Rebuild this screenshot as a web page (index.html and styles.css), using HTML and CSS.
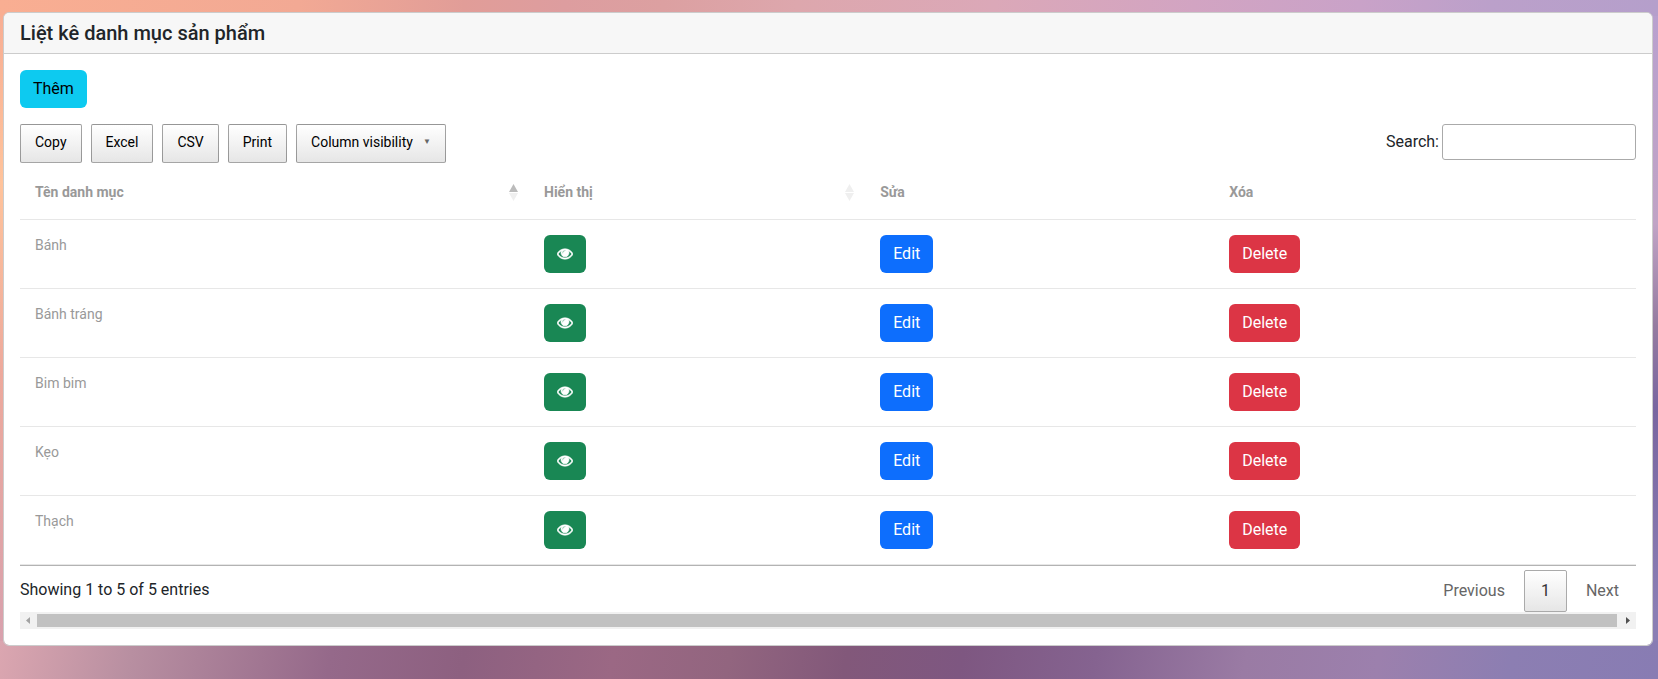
FILE: index.html
```html
<!DOCTYPE html>
<html lang="vi">
<head>
<meta charset="utf-8">
<title>Liệt kê danh mục sản phẩm</title>
<link rel="stylesheet" href="styles.css">
</head>
<body>
<svg class="defs" aria-hidden="true">
  <symbol id="eye" viewBox="0 64 1792 1792"><path d="M1664 960q-152-236-381-353 61 104 61 225 0 185-131.500 316.500t-316.500 131.500-316.500-131.500-131.500-316.500q0-121 61-225-229 117-381 353 133 205 333.500 326.500t434.500 121.500 434.500-121.500 333.500-326.500zm-720-384q0-20-14-34t-34-14q-125 0-214.500 89.500t-89.500 214.500q0 20 14 34t34 14 34-14 14-34q0-86 61-147t147-61q20 0 34-14t14-34zm848 384q0 34-20 69-140 230-376.500 368.500t-499.500 138.500-499.500-139-376.500-368q-20-35-20-69t20-69q140-229 376.500-368t499.500-139 499.500 139 376.500 368q20 35 20 69z"/></symbol>
</svg>
<main class="card">
  <header class="card-header"><h1 class="card-title">Liệt kê danh mục sản phẩm</h1></header>
  <div class="card-body">
    <a class="btn btn-info" href="#add">Thêm</a>
    <div class="toolbar">
      <div class="tools">
        <button class="tool" type="button">Copy</button>
        <button class="tool" type="button">Excel</button>
        <button class="tool" type="button">CSV</button>
        <button class="tool" type="button">Print</button>
        <button class="tool" type="button">Column visibility<span class="caret">▼</span></button>
      </div>
      <div class="search"><label for="search">Search:</label><input id="search" class="search-input" type="search"></div>
    </div>
    <table class="table">
      <colgroup><col class="col-name"><col class="col-show"><col class="col-edit"><col class="col-delete"></colgroup>
      <thead>
        <tr>
          <th scope="col" aria-sort="ascending"><div class="sortable">Tên danh mục<svg class="sort" viewBox="0 0 9 17" aria-hidden="true"><path class="on" d="M4.500 0L9 8H0z"/><path class="off" d="M0 9h9l-4.500 8z"/></svg></div></th>
          <th scope="col"><div class="sortable">Hiển thị<svg class="sort" viewBox="0 0 9 17" aria-hidden="true"><path class="off" d="M4.500 0L9 8H0z"/><path class="off" d="M0 9h9l-4.500 8z"/></svg></div></th>
          <th scope="col">Sửa</th>
          <th scope="col">Xóa</th>
        </tr>
      </thead>
      <tbody>
        <tr><td>Bánh</td><td><a class="btn btn-success" href="#show" aria-label="Hiển thị"><svg class="eye" aria-hidden="true"><use href="#eye"/></svg></a></td><td><a class="btn btn-primary" href="#edit">Edit</a></td><td><button class="btn btn-danger" type="button">Delete</button></td></tr>
        <tr><td>Bánh tráng</td><td><a class="btn btn-success" href="#show" aria-label="Hiển thị"><svg class="eye" aria-hidden="true"><use href="#eye"/></svg></a></td><td><a class="btn btn-primary" href="#edit">Edit</a></td><td><button class="btn btn-danger" type="button">Delete</button></td></tr>
        <tr><td>Bim bim</td><td><a class="btn btn-success" href="#show" aria-label="Hiển thị"><svg class="eye" aria-hidden="true"><use href="#eye"/></svg></a></td><td><a class="btn btn-primary" href="#edit">Edit</a></td><td><button class="btn btn-danger" type="button">Delete</button></td></tr>
        <tr><td>Kẹo</td><td><a class="btn btn-success" href="#show" aria-label="Hiển thị"><svg class="eye" aria-hidden="true"><use href="#eye"/></svg></a></td><td><a class="btn btn-primary" href="#edit">Edit</a></td><td><button class="btn btn-danger" type="button">Delete</button></td></tr>
        <tr><td>Thạch</td><td><a class="btn btn-success" href="#show" aria-label="Hiển thị"><svg class="eye" aria-hidden="true"><use href="#eye"/></svg></a></td><td><a class="btn btn-primary" href="#edit">Edit</a></td><td><button class="btn btn-danger" type="button">Delete</button></td></tr>
      </tbody>
    </table>
    <div class="table-footer">
      <div class="info">Showing 1 to 5 of 5 entries</div>
      <nav class="pages" aria-label="Pagination">
        <a class="page disabled" href="#prev">Previous</a>
        <a class="page current" href="#1">1</a>
        <a class="page disabled" href="#next">Next</a>
      </nav>
    </div>
    <div class="scrollbar" aria-hidden="true">
      <svg class="arrow" viewBox="0 0 17 17"><path fill="#a3a3a3" d="M10 5v7L6 8.500z"/></svg>
      <div class="thumb"></div>
      <svg class="arrow" viewBox="0 0 17 17"><path fill="#505050" d="M7 5v7l4-3.500z"/></svg>
    </div>
  </div>
</main>
</body>
</html>
```
FILE: styles.css
```css
* { box-sizing: border-box; }

body {
  margin: 0;
  min-height: 100vh;
  padding: 12px 5px 32px 3px;
  font: 16px/24px Roboto, "Liberation Sans", sans-serif;
  color: #212529;
  background:
    linear-gradient(90deg, #f9ae92 0%, #f2a994 18%, #e19d98 28%, #dd9d9f 34%, #dca0a1 40%, #dda7ad 48%, #dba8b8 60%, #d2a4c2 72%, #c9a2c8 82%, #bba0ca 90%, #b59fcb 100%) top / 100% 16px no-repeat,
    linear-gradient(100deg, #dba6b0 0%, #b88fa1 8%, #95698a 20%, #8d6080 28%, #9b6884 37%, #92657f 44%, #82587a 51%, #7e5781 58%, #856390 66%, #9a7ba4 75%, #9c80ad 83%, #8c7eb2 91%, #887cb3 100%) bottom / 100% 38px no-repeat,
    linear-gradient(180deg, #f7ac93 0%, #ffc39b 27%, #eda99c 55%, #d5a0b0 100%) left / 10px 100% no-repeat,
    linear-gradient(180deg, #b8a0cf 0%, #c0a3c5 33%, #957ba0 48%, #7966a0 60%, #8a7eb4 90%) right / 10px 100% no-repeat;
}

.defs { display: none; }

.card {
  background: #fff;
  background-clip: padding-box;
  border: 1px solid #ccc;
  border-radius: 6px;
}
.card-header {
  padding: 8px 16px;
  background: #f7f7f7;
  border-bottom: 1px solid #ccc;
  border-radius: 5px 5px 0 0;
}
.card-title { margin: 0; font-size: 20px; line-height: 24px; font-weight: 500; }
.card-body { padding: 16px; }

.btn {
  display: block;
  width: fit-content;
  padding: 6px 12px;
  border: 1px solid transparent;
  border-radius: 6px;
  font: inherit;
  line-height: 24px;
  color: #fff;
  text-decoration: none;
  cursor: pointer;
}
.btn-info { background: #0dcaf0; color: #000; }
.btn-success { background: #198754; }
.btn-primary { background: #0d6efd; }
.btn-danger { background: #dc3545; }
.eye { display: block; width: 16px; height: 24px; overflow: visible; fill: #fff; stroke: #fff; stroke-width: 70; }

.toolbar { display: flex; justify-content: space-between; align-items: flex-start; margin-top: 16px; }
.tools { display: flex; flex-wrap: wrap; gap: 9px; }
.tool {
  display: flex;
  align-items: center;
  padding: 6px 14px 9px;
  border: 1px solid rgba(0, 0, 0, 0.35);
  border-radius: 2px;
  font: inherit;
  font-size: 14px;
  line-height: 22px;
  color: #000;
  background: linear-gradient(#fff, #e6e6e6);
}
.caret { padding-left: 10px; font-size: 8px; line-height: 8px; color: #666; }
.search { display: flex; align-items: center; gap: 3px; }
.search-input {
  width: 194px;
  height: 36px;
  padding: 5px;
  border: 1px solid #aaa;
  border-radius: 3px;
  font: inherit;
  background: transparent;
}

.table {
  width: 100%;
  margin-top: 3px;
  table-layout: fixed;
  border-collapse: separate;
  border-spacing: 0;
  border-bottom: 1px solid #b3b3b3;
  font-size: 14px;
  line-height: 21px;
  color: #999;
}
.col-name { width: 31.5%; }
.col-show { width: 20.8%; }
.col-edit { width: 21.6%; }
.col-delete { width: 26.1%; }
.table th, .table td { padding: 15px; border-bottom: 1px solid #e7e7e7; text-align: left; vertical-align: top; }
.table th { padding: 16px 11px 16px 15px; font-weight: 700; }
.table .btn { font-size: 16px; }
.sortable { display: flex; justify-content: space-between; align-items: center; }
.sort { width: 9px; height: 17px; }
.on { fill: #bbb; }
.off { fill: #efefef; }

.table-footer { display: flex; justify-content: space-between; align-items: flex-start; padding-top: 4px; }
.info { padding-top: 8px; }
.pages { display: flex; gap: 2px; }
.page { padding: 8px 16px; border: 1px solid transparent; border-radius: 2px; color: #333; text-decoration: none; }
.page.current { border-color: #aaa; background: linear-gradient(#fff, #e6e6e6); }
.page.disabled { color: #666; }

.scrollbar { display: flex; align-items: center; height: 17px; background: #f1f1f1; }
.arrow { width: 17px; height: 17px; }
.thumb { flex: 1; height: 13px; margin-right: 2px; background: #c1c1c1; }
```
